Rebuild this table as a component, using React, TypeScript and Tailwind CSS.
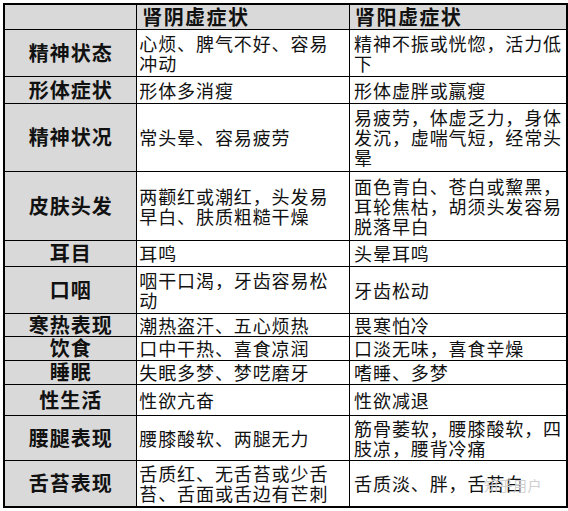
import React from "react";

type Row = { label: string; yin: string[]; yang: string[]; h: string };

const rows: Row[] = [
  { label: "精神状态", yin: ["心烦、脾气不好、容易", "冲动"], yang: ["精神不振或恍惚，活力低", "下"], h: "h-[47px]" },
  { label: "形体症状", yin: ["形体多消瘦"], yang: ["形体虚胖或羸瘦"], h: "h-[27px]" },
  { label: "精神状况", yin: ["常头晕、容易疲劳"], yang: ["易疲劳，体虚乏力，身体", "发沉，虚喘气短，经常头", "晕"], h: "h-[68px]" },
  { label: "皮肤头发", yin: ["两颧红或潮红，头发易", "早白、肤质粗糙干燥"], yang: ["面色青白、苍白或黧黑，", "耳轮焦枯，胡须头发容易", "脱落早白"], h: "h-[69px]" },
  { label: "耳目", yin: ["耳鸣"], yang: ["头晕耳鸣"], h: "h-[26px]" },
  { label: "口咽", yin: ["咽干口渴，牙齿容易松", "动"], yang: ["牙齿松动"], h: "h-[47px]" },
  { label: "寒热表现", yin: ["潮热盗汗、五心烦热"], yang: ["畏寒怕冷"], h: "h-[23px]" },
  { label: "饮食", yin: ["口中干热、喜食凉润"], yang: ["口淡无味，喜食辛燥"], h: "h-[24px]" },
  { label: "睡眠", yin: ["失眠多梦、梦呓磨牙"], yang: ["嗜睡、多梦"], h: "h-[24px]" },
  { label: "性生活", yin: ["性欲亢奋"], yang: ["性欲减退"], h: "h-[31px]" },
  { label: "腰腿表现", yin: ["腰膝酸软、两腿无力"], yang: ["筋骨萎软，腰膝酸软，四", "肢凉，腰背冷痛"], h: "h-[45px]" },
  { label: "舌苔表现", yin: ["舌质红、无舌苔或少舌", "苔、舌面或舌边有芒刺"], yang: ["舌质淡、胖，舌苔白"], h: "h-[47px]" },
];

const Lines = ({ lines }: { lines: string[] }) => (
  <>
    {lines.map((l, i) => (
      <div key={i} className="whitespace-nowrap">
        {l}
      </div>
    ))}
  </>
);

export default function App() {
  return (
    <div className="relative w-[568px] h-[511px] bg-white font-['Noto_Sans_CJK_SC',sans-serif] text-[#111]">
      <div className="pt-[3px] pl-[3px]">
        <table className="table-fixed border-collapse border-2 border-black">
          <colgroup>
            <col className="w-[134px]" />
            <col className="w-[213px]" />
            <col className="w-[213px]" />
          </colgroup>
          <thead>
            <tr className="h-[25px] bg-[#d9d9d9]">
              <th className="border border-black p-0" />
              <th className="border border-black px-[5px] py-0 text-left text-[20px] leading-[22px] font-bold tracking-[1.4px]">
                肾阴虚症状
              </th>
              <th className="border border-black px-[5px] py-0 text-left text-[20px] leading-[22px] font-bold tracking-[1.4px]">
                肾阳虚症状
              </th>
            </tr>
          </thead>
          <tbody>
            {rows.map((r) => (
              <tr key={r.label} className={r.h}>
                <td className="border border-black bg-[#d9d9d9] p-0 text-center align-middle text-[20px] leading-[22px] font-bold tracking-[1px]">
                  {r.label}
                </td>
                <td className="border border-black px-[2px] py-0 align-middle text-[18px] leading-[20px] tracking-[0.9px]">
                  <Lines lines={r.yin} />
                </td>
                <td className="border border-black px-[4px] py-0 align-middle text-[18px] leading-[20px] tracking-[0.9px]">
                  <Lines lines={r.yang} />
                </td>
              </tr>
            ))}
          </tbody>
        </table>
      </div>
      <div className="absolute left-[484px] top-[476px] text-[14px] leading-[18px] text-[#cfcfcf] tracking-[0.5px]">
        知乎用户
      </div>
    </div>
  );
}
